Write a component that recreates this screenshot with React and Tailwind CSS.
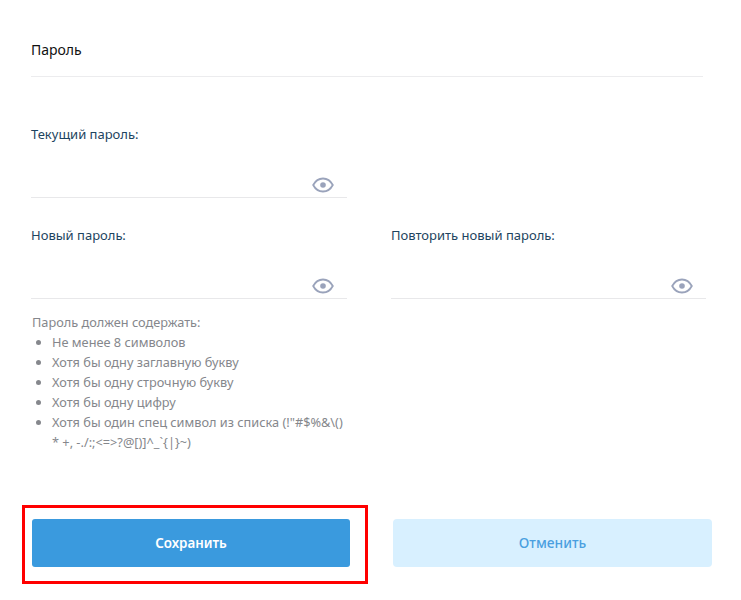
import React from "react";

function Eye() {
  return (
    <svg width="22" height="16" viewBox="0 0 22 16" fill="none" className="absolute right-[13px] bottom-[4px]">
      <path d="M1.2 8C3.4 3.8 6.9 1.5 11 1.5S18.6 3.8 20.8 8C18.6 12.2 15.1 14.5 11 14.5S3.4 12.2 1.2 8Z" stroke="#9aa3bb" strokeWidth="1.8" />
      <circle cx="11" cy="8" r="2.8" fill="#9aa3bb" />
    </svg>
  );
}

function Field({ label, className }) {
  return (
    <div className={className}>
      <div className="text-[13px] leading-[18px] text-[#1d4460] h-[18px]">{label}</div>
      <div className="relative h-[37px] mt-[18px] border-b border-[#e8e8ea]">
        <Eye />
      </div>
    </div>
  );
}

const items = [
  "Не менее 8 символов",
  "Хотя бы одну заглавную букву",
  "Хотя бы одну строчную букву",
  "Хотя бы одну цифру",
  "Хотя бы один спец символ из списка (!\"#$%&\\() * +, -./:;<=>?@[)]^_`{|}~)",
];

export default function App() {
  return (
    <div className="w-[741px] h-[600px] bg-white overflow-hidden font-['Noto_Sans',sans-serif]">
      <div className="pl-[31px] pt-[41px]">
        <div className="w-[672px] h-[36px] border-b border-[#ececee] text-[14px] leading-[18px] text-[#111]">Пароль</div>
        <Field label="Текущий пароль:" className="w-[316px] mt-[48px]" />
        <div className="flex mt-[28px]">
          <Field label="Новый пароль:" className="w-[316px]" />
          <Field label="Повторить новый пароль:" className="w-[315px] ml-[44px]" />
        </div>
        <div className="w-[316px] mt-[13px] text-[12.75px] leading-[20px] text-[#85878c]">
          <div className="pl-px">Пароль должен содержать:</div>
          <ul className="list-disc pl-[21px]">
            {items.map((t) => (
              <li key={t}>{t}</li>
            ))}
          </ul>
        </div>
      </div>
      <div className="flex mt-[53px] items-start">
        <div className="ml-[22px] border-[3px] border-[#ff0000] pl-[7px] pr-[15px] pt-[11px] pb-[14px]">
          <button className="w-[318px] h-[48px] rounded-[3px] bg-[#3a9ade] text-white text-[13.4px] font-semibold">Сохранить</button>
        </div>
        <button className="ml-[25px] mt-[14px] w-[319px] h-[48px] rounded-[4px] bg-[#d8f0ff] text-[#4a9fe0] text-[13.8px] font-medium">Отменить</button>
      </div>
    </div>
  );
}
